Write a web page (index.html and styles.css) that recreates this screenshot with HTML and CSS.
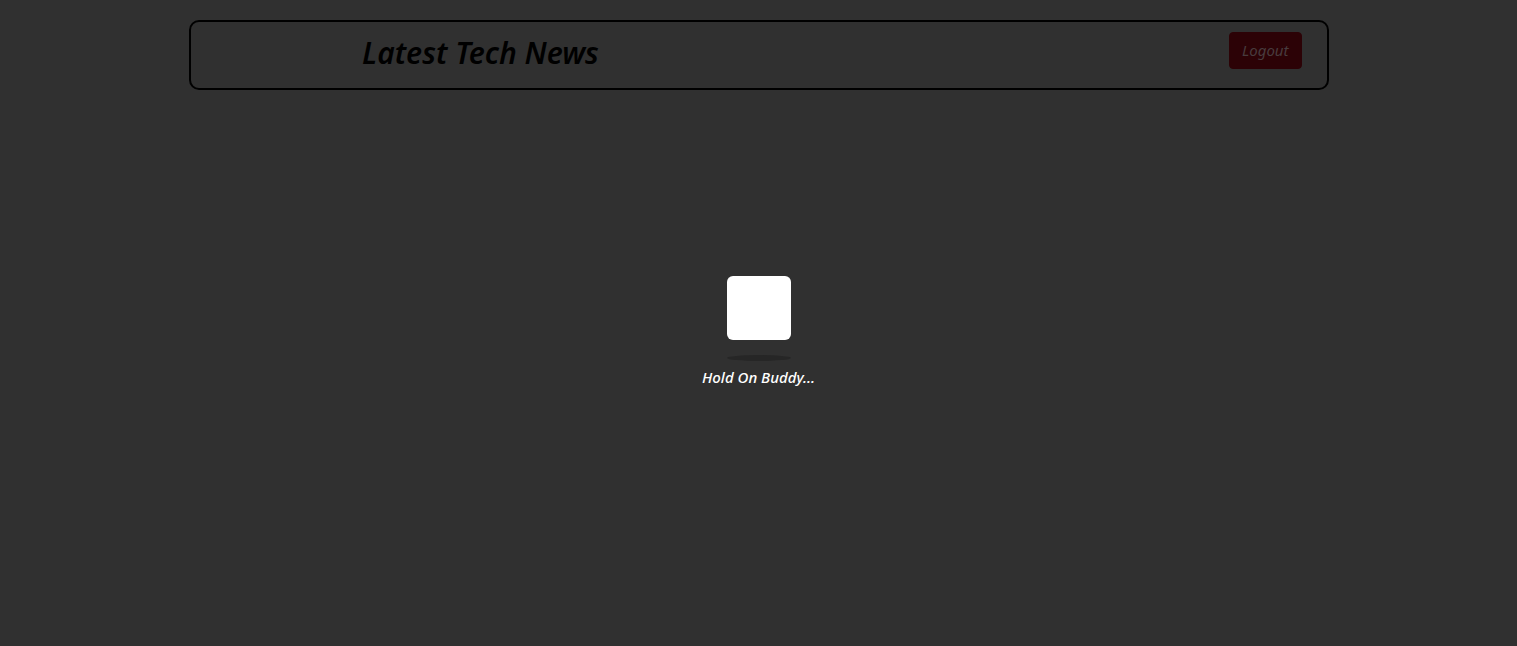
FILE: index.html
```html
<!DOCTYPE html>
<html lang="en">
<head>
<meta charset="utf-8">
<meta name="viewport" content="width=device-width, initial-scale=1">
<title>Latest Tech News</title>
<link rel="stylesheet" href="styles.css">
</head>
<body class="page">
<header class="header">
<h1 class="title">Latest Tech News</h1>
<button class="logout" type="button">Logout</button>
</header>
<main class="loading" role="status">
<div class="box"></div>
<div class="shadow"></div>
<p class="message">Hold On Buddy...</p>
</main>
</body>
</html>
```

FILE: styles.css
```css
* {
  box-sizing: border-box;
}

.page {
  display: flex;
  flex-direction: column;
  min-height: 100vh;
  margin: 0;
  padding: 20px 16px;
  background: #303030;
  font-family: "Noto Sans", sans-serif;
  font-style: italic;
}

.header {
  display: flex;
  align-items: flex-start;
  justify-content: space-between;
  width: 100%;
  max-width: 1140px;
  margin: 0 auto;
  padding: 10px 25px 14px;
  border: 2px solid #000;
  border-radius: 10px;
}

.title {
  margin: 0 0 0 13.5%;
  color: #000;
  font-size: 30px;
  font-weight: 600;
  line-height: 42px;
}

.logout {
  padding: 6px 12px;
  border: 1px solid #2c0206;
  border-radius: 4px;
  background: #2c0206;
  color: #483c3e;
  font: inherit;
  font-size: 15px;
  line-height: 23px;
}

.loading {
  display: flex;
  flex: 1;
  flex-direction: column;
  align-items: center;
  justify-content: center;
  padding-bottom: 52px;
}

.box {
  width: 64px;
  height: 64px;
  border-radius: 6px;
  background: #fff;
}

.shadow {
  width: 64px;
  height: 6px;
  margin-top: 15px;
  border-radius: 50%;
  background: #262626;
}

.message {
  margin: 4px 0 0;
  color: #fff;
  font-size: 15px;
  font-weight: 500;
  line-height: 24px;
}
```
